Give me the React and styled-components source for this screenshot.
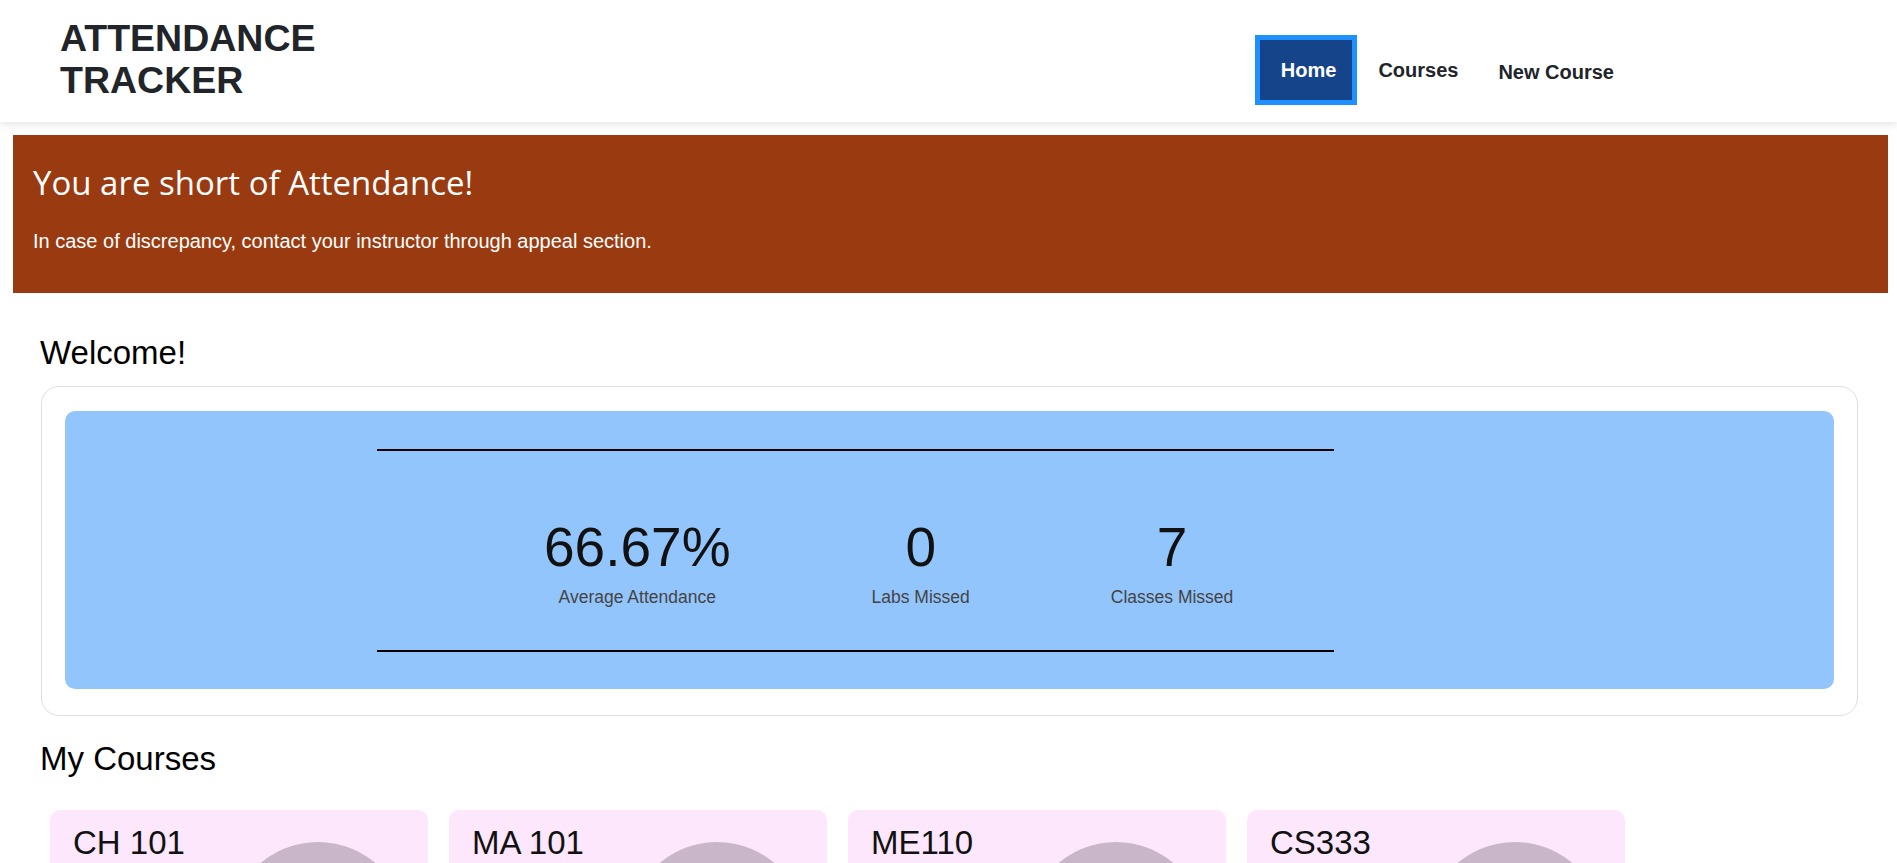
import styled, { createGlobalStyle } from "styled-components"

const GlobalStyle = createGlobalStyle`
    html, body {
        margin: 0;
        padding: 0;
        background: #fff;
        overflow: hidden;
    }
    body {
        font-family: "Liberation Sans", Arial, sans-serif;
    }
    * {
        box-sizing: border-box;
    }
`

const stats = [
    { value: "66.67%", label: "Average Attendance" },
    { value: "0", label: "Labs Missed" },
    { value: "7", label: "Classes Missed" },
]

const courses = ["CH 101", "MA 101", "ME110", "CS333"]

const App = () => {
    return (
        <>
            <GlobalStyle />
            <Header>
                <Logo>ATTENDANCE<br />TRACKER</Logo>
                <Nav>
                    <NavItem active>Home</NavItem>
                    <NavItem first>Courses</NavItem>
                    <NavItem drop>New Course</NavItem>
                </Nav>
            </Header>

            <Banner>
                <BannerTitle>You are short of Attendance!</BannerTitle>
                <BannerText>In case of discrepancy, contact your instructor through appeal section.</BannerText>
            </Banner>

            <Main>
                <SectionTitle>Welcome!</SectionTitle>
                <OuterCard>
                    <BlueBox>
                        <Summary>
                            <StatRow>
                                {stats.map((s) => (
                                    <Stat key={s.label}>
                                        <StatValue>{s.value}</StatValue>
                                        <StatLabel>{s.label}</StatLabel>
                                    </Stat>
                                ))}
                            </StatRow>
                        </Summary>
                    </BlueBox>
                </OuterCard>

                <SectionTitle courses>My Courses</SectionTitle>
                <CourseRow>
                    {courses.map((c) => (
                        <CourseCard key={c}>
                            <CourseName>{c}</CourseName>
                            <svg width="178" height="178" viewBox="0 0 178 178" style={{ marginTop: 18, flexShrink: 0 }}>
                                <circle cx="89" cy="89" r="89" fill="#c9b6c8" />
                            </svg>
                        </CourseCard>
                    ))}
                </CourseRow>
            </Main>
        </>
    )
}

export default App

const Header = styled.div`
    width: 100%;
    height: 122px;
    display: flex;
    justify-content: space-between;
    align-items: flex-start;
    padding: 17px 263px 0 60px;
    background: #fff;
    box-shadow: 0 3px 8px rgba(0, 0, 0, 0.1);
    position: relative;
`
const Logo = styled.div`
    font-family: "Liberation Sans", Arial, sans-serif;
    font-weight: 700;
    font-size: 37.5px;
    line-height: 42px;
    color: #212529;
`
const Nav = styled.div`
    display: flex;
    align-items: center;
    margin-top: 18px;
`
const NavItem = styled.div`
    height: 70px;
    display: flex;
    align-items: center;
    font-size: 20px;
    font-weight: 700;
    line-height: 23px;
    color: ${(p) => (p.active ? "#fff" : "#212529")};
    background: ${(p) => (p.active ? "#16448a" : "transparent")};
    border: ${(p) => (p.active ? "5px solid #1e90ff" : "none")};
    padding: ${(p) => (p.active ? "0 16px 0 21px" : p.first ? "0 20px 0 21px" : "0 20px")};
    padding-top: ${(p) => (p.drop ? "4px" : "0")};
    cursor: pointer;
`
const Banner = styled.div`
    margin: 13px 9px 0 13px;
    height: 158px;
    background: #9a3a10;
    color: #fff;
    padding: 28px 20px 0 20px;
`
const BannerTitle = styled.div`
    font-family: "Open Sans", "Noto Sans", sans-serif;
    font-size: 33px;
    line-height: 40px;
    font-weight: 400;
`
const BannerText = styled.div`
    margin-top: 27px;
    font-size: 20px;
    line-height: 23px;
`
const Main = styled.div`
    padding: 0 39px 0 40px;
`
const SectionTitle = styled.div`
    font-size: 33px;
    line-height: 37px;
    color: #000;
    margin-top: ${(p) => (p.courses ? "24px" : "41px")};
    margin-bottom: ${(p) => (p.courses ? "33px" : "15px")};
`
const OuterCard = styled.div`
    margin-left: 1px;
    border: 1px solid #dedede;
    border-radius: 18px;
    padding: 24px 23px 26px 23px;
`
const BlueBox = styled.div`
    background: #93c5fd;
    border-radius: 10px;
    padding: 38px 0 37px 0;
`
const Summary = styled.div`
    margin-left: 312px;
    width: 957px;
    border-top: 2px solid #000;
    border-bottom: 2px solid #000;
    padding: 64px 0 43px 0;
`
const StatRow = styled.div`
    display: flex;
    gap: 141px;
    padding-left: 167px;
`
const Stat = styled.div`
    display: flex;
    flex-direction: column;
    align-items: center;
`
const StatValue = styled.div`
    font-size: 55px;
    line-height: 64px;
    color: #111;
`
const StatLabel = styled.div`
    margin-top: 8px;
    font-size: 17.5px;
    line-height: 20px;
    color: #444;
`
const CourseRow = styled.div`
    display: flex;
    gap: 21px;
    padding-left: 10px;
`
const CourseCard = styled.div`
    width: 378px;
    height: 240px;
    background: #fde7fc;
    border-radius: 10px;
    display: flex;
    justify-content: space-between;
    padding: 14px 21px 0 23px;
`
const CourseName = styled.div`
    font-size: 33px;
    line-height: 37px;
    color: #111;
`
